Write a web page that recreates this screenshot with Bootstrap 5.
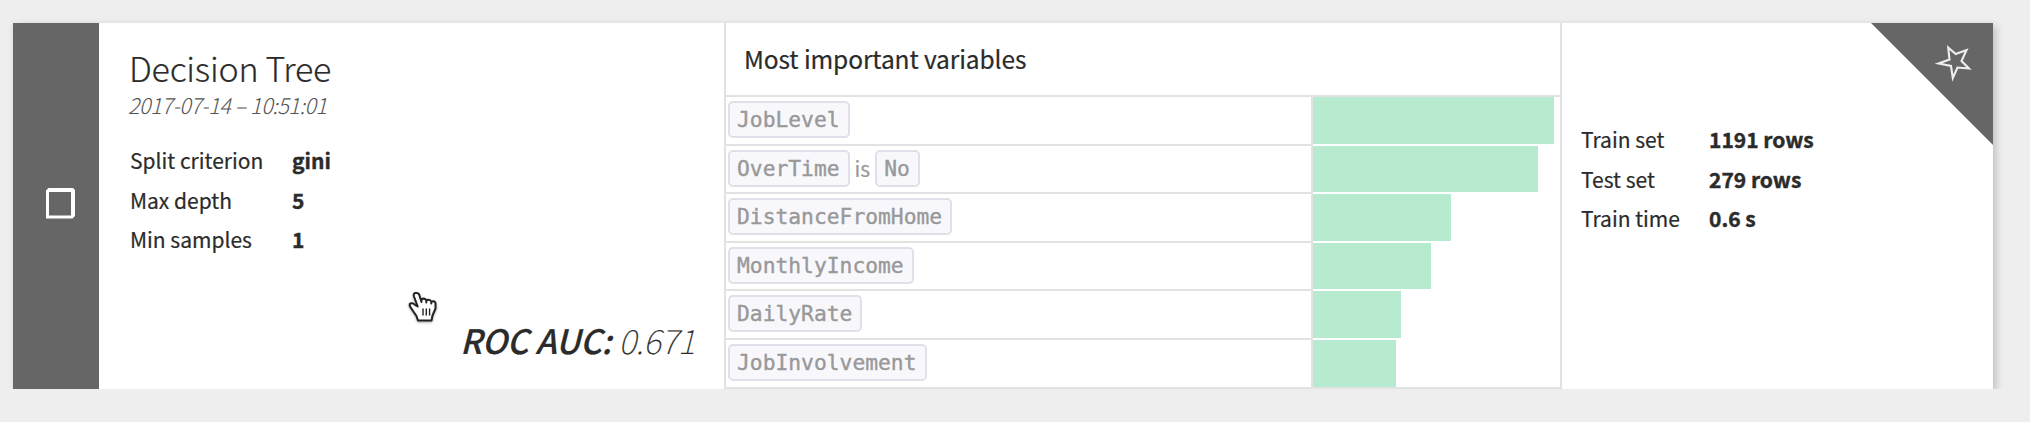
<!DOCTYPE html>
<html lang="en">
<head>
<meta charset="utf-8">
<title>Decision Tree</title>
<link href="https://cdn.jsdelivr.net/npm/bootstrap@5.3.0/dist/css/bootstrap.min.css" rel="stylesheet">
<style>
  body { background: #eee; color: #2b2b2b; font-family: "Noto Sans CJK SC", sans-serif; font-size: 21px; line-height: 40px; overflow: hidden; -webkit-text-stroke: .2px; }
  .model-card { margin: 23px 0 0 13px; width: 1980px; height: 366px; border: 0; border-radius: 0; box-shadow: 3px 3px 8px rgba(0,0,0,.2); }
  .select-bar { width: 86px; background: #666; padding: 0 0 6px 10px; }
  .summary { width: 625px; padding: 24px 29px 0 30px; white-space: nowrap; }
  .model-title { font-size: 34px; font-weight: 300; line-height: 42px; letter-spacing: -.25px; margin: 0; }
  .model-date { font-size: 21.5px; font-weight: 300; font-style: italic; line-height: 32px; letter-spacing: -.4px; margin-left: -1px; color: #555; -webkit-text-stroke: 0; }
  .params { display: grid; grid-template-columns: 162px auto; margin: 20px 0 0 1px; line-height: 39.7px; }
  .params b, .sets b { font-weight: 700; -webkit-text-stroke: .4px; }
  .metric { font-size: 33.5px; line-height: 48px; letter-spacing: -.2px; font-style: italic; font-weight: 100; padding-bottom: 25px; }
  .metric b { font-weight: 500; }
  .variables { width: 838px; border: solid #e2e2e2; border-width: 0 2px 2px; }
  .variables-head { height: 74px; border-bottom: 2px solid #e2e2e2; padding: 2px 18px; font-size: 24.5px; line-height: 67px; letter-spacing: -.1px; }
  .var-row { height: 48.6px; }
  .var-row:last-child { height: auto; flex: 1 1 0; }
  .var-name { width: 587px; border-right: 2px solid #e2e2e2; color: #999; padding: 4px 0 0 2px; gap: 5px; }
  .var-row:not(:last-child) .var-name { border-bottom: 2px solid #e2e2e2; }
  .op { line-height: 36px; }
  .chip { font: 21.3px/34px "DejaVu Sans Mono", monospace; height: 37px; padding: 0 8px 0 7px; border: 2px solid #e0e0ea; border-radius: 5px; background: #f8f8fc; -webkit-text-stroke: .4px; }
  .bar { background: #b7ebcf; }
  .var-row:not(:last-child) .bar { margin-bottom: 2px; }
  .sets { padding: 97px 0 0 19px; display: grid; grid-template-columns: 128px auto; align-content: start; line-height: 39.7px; }
  .corner { top: 0; right: 0; }
  .pointer { left: 394px; top: 266px; filter: drop-shadow(0 1px 1px rgba(0,0,0,.35)); }
</style>
</head>
<body>
<main class="model-card card flex-row position-relative">
  <div class="select-bar d-flex align-items-center justify-content-center flex-shrink-0">
    <svg width="30" height="31" viewBox="0 0 30 31"><path fill="#fff" fill-rule="evenodd" d="M2.500 0H27l2 2v26l-2.500 2.500H0V2.500zM3 4v23.500h22V4z"/></svg>
  </div>
  <section class="summary d-flex flex-column flex-shrink-0">
    <h1 class="model-title">Decision Tree</h1>
    <div class="model-date">2017-07-14 – 10:51:01</div>
    <div class="params">
      <span>Split criterion</span><b>gini</b>
      <span>Max depth</span><b>5</b>
      <span>Min samples</span><b>1</b>
    </div>
    <div class="metric mt-auto ms-auto"><b>ROC AUC:</b> 0.671</div>
  </section>
  <section class="variables d-flex flex-column flex-shrink-0">
    <div class="variables-head">Most important variables</div>
    <div class="var-row d-flex"><div class="var-name d-flex"><span class="chip">JobLevel</span></div><div class="bar" style="width:241px"></div></div>
    <div class="var-row d-flex"><div class="var-name d-flex"><span class="chip">OverTime</span><span class="op">is</span><span class="chip">No</span></div><div class="bar" style="width:225px"></div></div>
    <div class="var-row d-flex"><div class="var-name d-flex"><span class="chip">DistanceFromHome</span></div><div class="bar" style="width:138px"></div></div>
    <div class="var-row d-flex"><div class="var-name d-flex"><span class="chip">MonthlyIncome</span></div><div class="bar" style="width:118px"></div></div>
    <div class="var-row d-flex"><div class="var-name d-flex"><span class="chip">DailyRate</span></div><div class="bar" style="width:88px"></div></div>
    <div class="var-row d-flex"><div class="var-name d-flex"><span class="chip">JobInvolvement</span></div><div class="bar" style="width:82.500px"></div></div>
  </section>
  <section class="sets">
    <span>Train set</span><b>1191 rows</b>
    <span>Test set</span><b>279 rows</b>
    <span>Train time</span><b>0.6 s</b>
  </section>
  <svg class="corner position-absolute" width="122" height="122" viewBox="0 0 122 122"><path fill="#666" d="M0 0H122V122z"/><path fill="none" stroke="#eee" stroke-width="2.100" d="M77.200 24.500L84.700 31 95.500 27 90.500 38 98 45.500 86.500 44.500 81.800 55 80 43 67.500 40.500 78.500 36.500z"/></svg>
  <svg class="pointer position-absolute" width="34" height="38" viewBox="0 0 34 38"><path fill="#fff" stroke="#222" stroke-width="2" stroke-linejoin="round" d="M10.700 17.500L7 7.500Q6 4.500 8.500 4 11.500 3.500 12.300 6L14.500 13V10.500Q17 8.500 19.300 11V13.500 11.500Q22 9.500 24.300 12.500V14.500 13Q27 11 28.500 14V19.500L25.500 26.500 24.500 31.500H11L9.500 27 4 19Q1.500 15.500 3.500 14.500 6 13.500 8 16z"/><path stroke="#222" stroke-width="1.400" d="M16 19.500v7M19.300 19.500v7M22.600 19.500v7"/></svg>
</main>
<script src="https://cdn.jsdelivr.net/npm/bootstrap@5.3.0/dist/js/bootstrap.bundle.min.js"></script>
</body>
</html>
